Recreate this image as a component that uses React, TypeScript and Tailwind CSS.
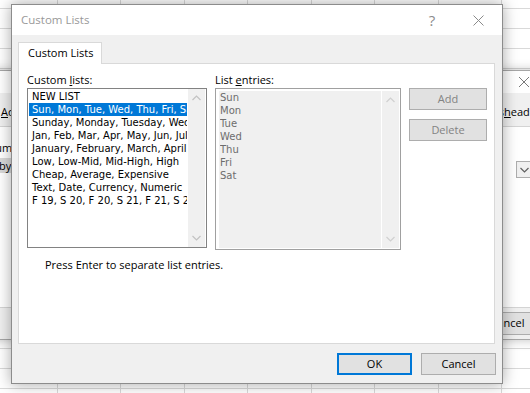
import React from 'react';

const customLists = [
  'NEW LIST',
  'Sun, Mon, Tue, Wed, Thu, Fri, Sat',
  'Sunday, Monday, Tuesday, Wednesday, Thursday, Friday, Saturday',
  'Jan, Feb, Mar, Apr, May, Jun, Jul, Aug, Sep, Oct, Nov, Dec',
  'January, February, March, April, May, June, July, August',
  'Low, Low-Mid, Mid-High, High',
  'Cheap, Average, Expensive',
  'Text, Date, Currency, Numeric',
  'F 19, S 20, F 20, S 21, F 21, S 22',
];

const entries = ['Sun', 'Mon', 'Tue', 'Wed', 'Thu', 'Fri', 'Sat'];

const Chevron = ({ up, color }: { up?: boolean; color: string }) => (
  <svg width="9" height="6" viewBox="0 0 9 6" fill="none">
    <path d={up ? 'M0.5 5 L4.5 1 L8.5 5' : 'M0.5 1 L4.5 5 L8.5 1'} stroke={color} strokeWidth="1.2" />
  </svg>
);

const ScrollBar = ({ color }: { color: string }) => (
  <div className="w-[17px] shrink-0 flex flex-col justify-between items-center bg-[#f0f0f0] py-[6px]">
    <Chevron up color={color} />
    <Chevron color={color} />
  </div>
);

// Excel "Sort" dialog sitting behind, mostly covered
const SortDialog = () => (
  <div className="absolute left-[-40px] top-[70px] w-[590px] h-[270px] flex flex-col bg-white border border-[#a6a6a6] shadow-[0_0_10px_rgba(0,0,0,0.25)] text-black">
    <div className="h-[22px] flex justify-end items-center pr-[20px]">
      <svg width="10" height="10" viewBox="0 0 10 10">
        <path d="M0 0 L10 10 M10 0 L0 10" stroke="#7a7a7a" strokeWidth="1" />
      </svg>
    </div>
    <div className="h-[34px] bg-[#f0f0f0] flex items-center pt-[6px] border-b border-[#d4d4d4]">
      <div className="w-[543px] shrink-0 pl-[40px] flex justify-between">
        <span>
          <span className="underline">A</span>dd Level
        </span>
        <span>My data has </span>
      </div>
      <span>
        <span className="underline">h</span>eaders
      </span>
    </div>
    <div className="flex-1 flex flex-col pt-[13px]">
      <div className="pl-[18px] h-[16px] leading-[16px]">Column</div>
      <div className="flex items-start mt-[2px]">
        <div className="w-[300px] h-[15px] bg-[#d9d9d9] pl-[14px] leading-[15px]">Sort by</div>
        <div className="ml-[255px] mt-[3px] w-[16px] h-[17px] border border-[#adadad] bg-[#f0f0f0] flex items-center justify-center">
          <Chevron color="#606060" />
        </div>
      </div>
    </div>
    <div className="h-[32px] bg-[#f0f0f0] border-t border-[#d4d4d4] flex items-center justify-end pr-[4px]">
      <div className="w-[75px] h-[23px] bg-[#e1e1e1] border border-[#adadad] flex items-center justify-center">
        Cancel
      </div>
    </div>
  </div>
);

const CustomListsDialog = () => (
  <div className="absolute left-[11px] top-[4px] w-[492px] h-[380px] flex flex-col bg-[#f0f0f0] border border-[#8c8c8c] shadow-[0_0_14px_rgba(0,0,0,0.35)]">
    {/* title bar */}
    <div className="h-[30px] shrink-0 bg-white flex items-center">
      <span className="pl-[9px] text-[11.5px] text-[#999999]">Custom Lists</span>
      <div className="ml-auto flex pr-[1px]">
        <div className="w-[46px] h-[30px] flex items-center justify-center text-[15px] text-[#8c8c8c]">?</div>
        <div className="w-[46px] h-[30px] flex items-center justify-center">
          <svg width="11" height="11" viewBox="0 0 11 11">
            <path d="M0.5 0.5 L10.5 10.5 M10.5 0.5 L0.5 10.5" stroke="#8a8a8a" strokeWidth="1" />
          </svg>
        </div>
      </div>
    </div>

    {/* tabs */}
    <div className="pl-[6px] pt-[7px]">
      <div className="relative z-10 -mb-px w-[84px] h-[22px] bg-white border border-b-0 border-[#d9d9d9] flex items-center pl-[9px] text-black">
        Custom Lists
      </div>
      <div className="w-[477px] h-[281px] bg-white border border-[#d9d9d9] pl-[8px] pt-[8px] text-black">
        <div className="grid grid-cols-[180px_186px_78px] grid-rows-[16px_162px] gap-x-[8px]">
          <div className="leading-[16px]">
            Custom <span className="underline">l</span>ists:
          </div>
          <div className="leading-[16px]">
            List <span className="underline">e</span>ntries:
          </div>
          <div />

          {/* custom lists box */}
          <div className="h-[160px] border border-[#828282] bg-white flex font-['DejaVu_Sans',sans-serif] text-[10px]">
            <div className="flex-1 min-w-0 p-[1px] overflow-hidden">
              {customLists.map((item, i) => (
                <div
                  key={item}
                  className={`h-[13px] leading-[13px] pl-[3px] whitespace-nowrap overflow-hidden ${
                    i === 1 ? 'bg-[#0078d7] text-white' : 'text-black'
                  }`}
                >
                  {item}
                </div>
              ))}
            </div>
            <ScrollBar color="#c2c2c2" />
            <div className="w-px" />
          </div>

          {/* list entries box (disabled) */}
          <div className="h-[162px] border border-[#a0a0a0] bg-white pt-[2px] pb-[1px] pl-[3px] pr-[1px] flex font-['DejaVu_Sans',sans-serif] text-[10px]">
            <div className="flex-1 bg-[#f0f0f0] text-[#6d6d6d] pl-px">
              {entries.map((e) => (
                <div key={e} className="h-[13px] leading-[13px] overflow-hidden">
                  {e}
                </div>
              ))}
            </div>
            <div className="w-px bg-white" />
            <ScrollBar color="#d0d0d0" />
          </div>

          <div className="flex flex-col gap-[9px]">
            <div className="h-[22px] bg-[#e1e1e1] border border-[#adadad] flex items-center justify-center text-[#838383]">
              Add
            </div>
            <div className="h-[22px] bg-[#e1e1e1] border border-[#adadad] flex items-center justify-center text-[#838383]">
              Delete
            </div>
          </div>
        </div>
        <div className="ml-[18px] mt-[7px] leading-[16px]">Press Enter to separate list entries.</div>
      </div>
    </div>

    {/* footer buttons */}
    <div className="flex justify-end gap-[9px] pr-[6px] mt-[9px]">
      <div className="w-[75px] h-[22px] bg-[#e1e1e1] border-2 border-[#0078d7] flex items-center justify-center text-black">
        OK
      </div>
      <div className="w-[75px] h-[22px] bg-[#e1e1e1] border border-[#adadad] flex items-center justify-center text-black">
        Cancel
      </div>
    </div>
  </div>
);

export default function App() {
  return (
    <div className="relative w-[530px] h-[393px] overflow-hidden bg-white font-['Open_Sans',sans-serif] text-[11px]">
      <div className="absolute inset-0 bg-[image:repeating-linear-gradient(to_bottom,transparent_0_8px,#d9d9d9_8px_9px,transparent_9px_20px),repeating-linear-gradient(to_right,transparent_0_57px,#d9d9d9_57px_58px,transparent_58px_63.5px)]" />
      <SortDialog />
      <CustomListsDialog />
    </div>
  );
}
